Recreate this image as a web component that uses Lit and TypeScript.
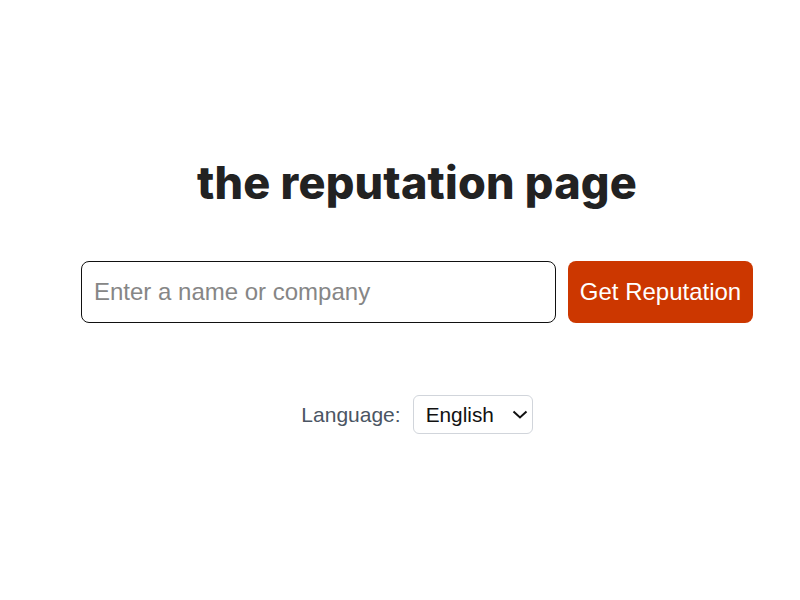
import { LitElement, html, css } from "lit";
import { customElement } from "lit/decorators.js";

@customElement("app-root")
export class AppRoot extends LitElement {
  static styles = css`
    :host {
      display: block;
      height: 600px;
      background: #fff;
      font-family: "Liberation Sans", Arial, sans-serif;
    }
    .page {
      box-sizing: border-box;
      height: 600px;
      padding: 155px 47px 0 81px;
      display: flex;
      flex-direction: column;
      align-items: center;
    }
    h1 {
      margin: 0;
      font-family: "Inter", "Lato", sans-serif;
      font-weight: 800;
      font-size: 45px;
      line-height: 56px;
      letter-spacing: 0.2px;
      font-variant-ligatures: none;
      color: #222;
      white-space: nowrap;
    }
    form {
      margin: 50px 0 0;
      display: flex;
      gap: 12px;
      width: 672px;
    }
    input {
      box-sizing: border-box;
      width: 475px;
      height: 62px;
      padding: 0 12px;
      border: 1px solid #111;
      border-radius: 8px;
      background: #fff;
      font: 24px "Liberation Sans", Arial, sans-serif;
      color: #111;
      outline: none;
    }
    input::placeholder {
      color: #868686;
      opacity: 1;
    }
    button {
      box-sizing: border-box;
      width: 185px;
      height: 62px;
      padding: 0;
      border: 0;
      border-radius: 8px;
      background: #cc3700;
      color: #fff;
      font: 24px "Liberation Sans", Arial, sans-serif;
    }
    .lang {
      margin-top: 72px;
      display: flex;
      align-items: center;
      gap: 12px;
    }
    label {
      font-size: 21px;
      color: #4b5563;
    }
    .select-wrap {
      position: relative;
      display: flex;
    }
    select {
      appearance: none;
      -webkit-appearance: none;
      box-sizing: border-box;
      width: 120px;
      height: 39px;
      padding: 0 12px;
      border: 1px solid #d1d5db;
      border-radius: 6px;
      background: #fff;
      color: #111;
      font: 20.8px "Liberation Sans", Arial, sans-serif;
    }
    .chev {
      position: absolute;
      right: 5px;
      top: 15px;
      width: 16px;
      height: 9px;
      pointer-events: none;
    }
  `;

  render() {
    return html`
      <div class="page">
        <h1>the reputation page</h1>
        <form @submit=${(e: Event) => e.preventDefault()}>
          <input type="text" placeholder="Enter a name or company" />
          <button type="submit">Get Reputation</button>
        </form>
        <div class="lang">
          <label for="l">Language:</label>
          <div class="select-wrap">
            <select id="l"><option>English</option></select>
            <svg class="chev" viewBox="0 0 16 9" fill="none" stroke="#111" stroke-width="2">
              <path d="M1.5 1.5 L8 7.5 L14.5 1.5" />
            </svg>
          </div>
        </div>
      </div>
    `;
  }
}
